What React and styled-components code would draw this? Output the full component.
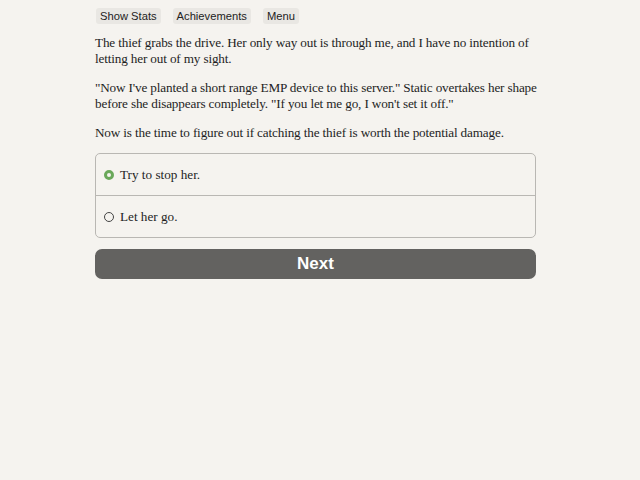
import React, { useState } from "react";
import styled, { createGlobalStyle } from "styled-components";

const Global = createGlobalStyle`
  html, body { margin: 0; padding: 0; background: #f5f3ef; }
  body { font-family: "Liberation Serif", serif; color: #1e1e1e; }
`;

const Page = styled.div`
  width: 441px;
  margin-left: 95px;
  padding-top: 8px;
`;

const Toolbar = styled.div`
  display: flex;
  gap: 12px;
  padding-left: 1px;
`;

const ToolButton = styled.button`
  font-family: "Liberation Sans", Arial, sans-serif;
  font-size: 11.2px;
  color: #222;
  background: #e9e7e3;
  border: none;
  border-radius: 3px;
  padding: 2px 4px;
  line-height: 12px;
`;

/* Story column runs a little wider than the choice box so long lines keep their breaks */
const Story = styled.div`
  width: 462px;
  margin-top: 11px;
  font-size: 13.2px;
  letter-spacing: -0.15px;
  line-height: 16px;
`;

const Para = styled.p`
  margin: 0 0 13px;
  &:last-child { margin-bottom: 0; }
`;

const Choices = styled.div`
  margin-top: 12px;
  border: 1px solid #b9b7b3;
  border-radius: 5px;
  overflow: hidden;
`;

const Choice = styled.label`
  display: flex;
  align-items: center;
  height: 41px;
  padding-left: 8px;
  font-size: 13.2px;
  cursor: pointer;
  & + & { border-top: 1px solid #b9b7b3; }
`;

const Radio = styled.span`
  box-sizing: border-box;
  width: 10px;
  height: 10px;
  border-radius: 50%;
  margin-right: 6px;
  border: ${(p) => (p.$on ? "3px solid #6aa85a" : "1px solid #444")};
  background: ${(p) => (p.$on ? "#f5f3ef" : "transparent")};
`;

const NextButton = styled.button`
  display: block;
  width: 100%;
  margin-top: 11px;
  height: 30px;
  border: none;
  border-radius: 7px;
  background: #636260;
  color: #fff;
  font-family: "Liberation Sans", Arial, sans-serif;
  font-weight: bold;
  font-size: 17px;
`;

export default function App() {
  const [sel, setSel] = useState(0);
  const opts = ["Try to stop her.", "Let her go."];
  return (
    <>
      <Global />
      <Page>
        <Toolbar>
          <ToolButton>Show Stats</ToolButton>
          <ToolButton>Achievements</ToolButton>
          <ToolButton>Menu</ToolButton>
        </Toolbar>
        <Story>
          <Para>
            The thief grabs the drive. Her only way out is through me, and I have no intention of
            letting her out of my sight.
          </Para>
          <Para>
            "Now I've planted a short range EMP device to this server." Static overtakes her shape
            before she disappears completely. "If you let me go, I won't set it off."
          </Para>
          <Para>
            Now is the time to figure out if catching the thief is worth the potential damage.
          </Para>
        </Story>
        <Choices>
          {opts.map((o, i) => (
            <Choice key={o} onClick={() => setSel(i)}>
              <Radio $on={sel === i} />
              {o}
            </Choice>
          ))}
        </Choices>
        <NextButton>Next</NextButton>
      </Page>
    </>
  );
}
